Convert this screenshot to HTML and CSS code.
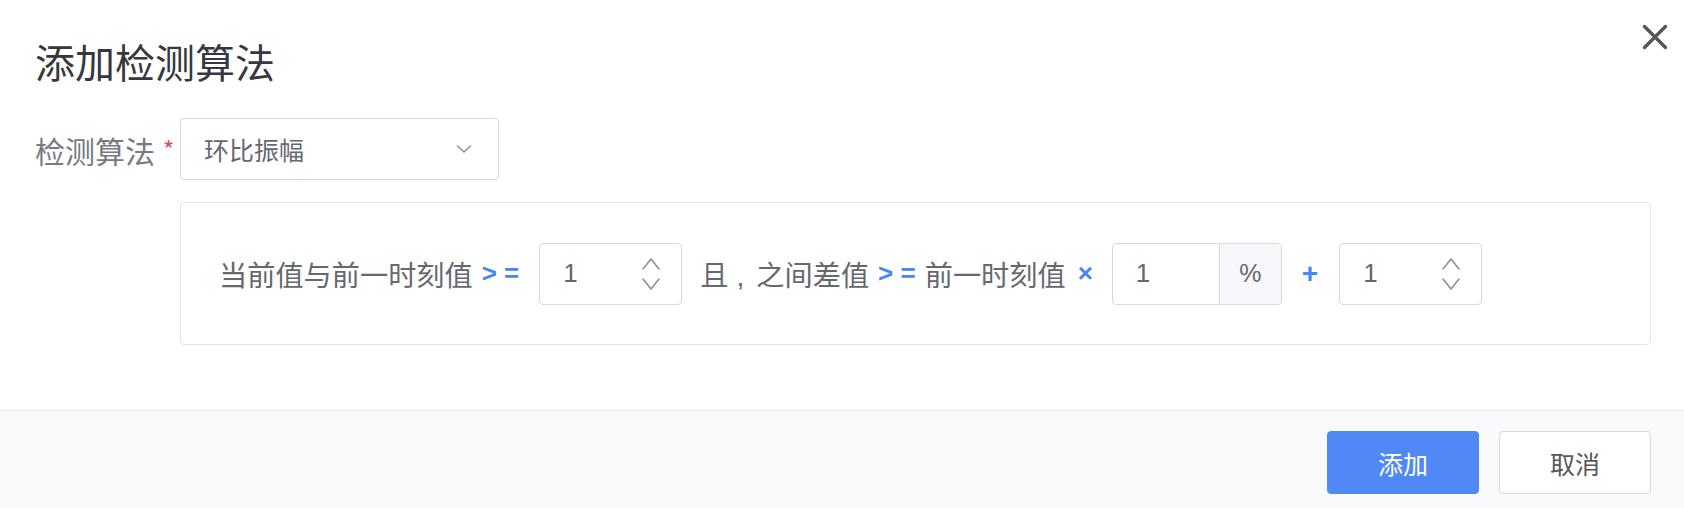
FILE: index.html
```html
<!DOCTYPE html>
<html lang="zh-CN">
<head>
<meta charset="utf-8">
<title>添加检测算法</title>
<link rel="stylesheet" href="styles.css">
</head>
<body>
<div class="dialog">
  <div class="header">
    <h1 class="title">添加检测算法</h1>
    <button class="close" aria-label="关闭">
      <svg width="26" height="26" viewBox="0 0 26 26"><path d="M2.5 2.5 L23.5 23.5 M23.5 2.5 L2.5 23.5" stroke="#55575d" stroke-width="3.4" stroke-linecap="round" fill="none"/></svg>
    </button>
  </div>
  <div class="body">
    <div class="form-row">
      <div class="label">检测算法<span class="req">*</span></div>
      <div class="select">
        <span class="select-text">环比振幅</span>
        <svg class="chev" width="16" height="10" viewBox="0 0 16 10"><path d="M1.5 2 L8 8 L14.5 2" stroke="#8e9096" stroke-width="1.6" fill="none" stroke-linecap="round" stroke-linejoin="round"/></svg>
      </div>
    </div>
    <div class="cond-box">
      <span class="txt">当前值与前一时刻值</span>
      <span class="op op-ge1">&gt;&nbsp;=</span>
      <div class="field num">
        <span class="val">1</span>
        <svg class="spin" width="20" height="34" viewBox="0 0 20 34"><path d="M2 12 L10 2 L18 12 M2 22 L10 32 L18 22" stroke="#8e9096" stroke-width="1.6" fill="none" stroke-linecap="round" stroke-linejoin="round"/></svg>
      </div>
      <span class="txt txt-and">且<span class="comma">,</span>之间差值</span>
      <span class="op">&gt;&nbsp;=</span>
      <span class="txt">前一时刻值</span>
      <span class="op op-mul">×</span>
      <div class="field pct">
        <span class="val">1</span>
        <span class="append">%</span>
      </div>
      <span class="op op-plus">+</span>
      <div class="field num">
        <span class="val">1</span>
        <svg class="spin" width="20" height="34" viewBox="0 0 20 34"><path d="M2 12 L10 2 L18 12 M2 22 L10 32 L18 22" stroke="#8e9096" stroke-width="1.6" fill="none" stroke-linecap="round" stroke-linejoin="round"/></svg>
      </div>
    </div>
  </div>
  <div class="footer">
    <button class="btn primary">添加</button>
    <button class="btn">取消</button>
  </div>
</div>
</body>
</html>
```

FILE: styles.css
```css
* { box-sizing: border-box; }
html, body { margin: 0; padding: 0; background: #fff; }
body { font-family: "Noto Sans CJK SC", "Noto Sans", sans-serif; color: #606266; }

.dialog {
  position: relative;
  height: 100vh;
  display: flex;
  flex-direction: column;
}

.header { padding: 37px 35px 0; }
.title {
  margin: 0;
  font-size: 40px;
  line-height: 48px;
  font-weight: 400;
  color: #36383d;
}
.close {
  position: absolute;
  top: 24px;
  right: 16px;
  padding: 0;
  border: 0;
  background: none;
  width: 26px;
  height: 26px;
}
.close svg { display: block; }

.body { padding: 33px 33px 0 35px; }

.form-row { display: flex; align-items: center; }
.label {
  width: 145px;
  font-size: 30px;
  line-height: 40px;
  color: #777a80;
}
.req { color: #e5484d; font-size: 24px; margin-left: 8px; vertical-align: 4px; }

.select {
  width: 319px;
  height: 62px;
  border: 1px solid #d6d8dd;
  border-radius: 4px;
  display: flex;
  align-items: center;
  justify-content: space-between;
  padding: 0 26px 0 23px;
}
.select-text { font-size: 25px; color: #66686e; }
.chev { display: block; }

.cond-box {
  margin: 22px 0 0 145px;
  height: 143px;
  border: 1px solid #e2e4e9;
  border-radius: 4px;
  display: flex;
  align-items: center;
  padding-left: 38px;
}
.txt { font-size: 28.2px; color: #66686e; white-space: nowrap; }
.txt-and { margin-left: 18px; }
.comma {
  font-family: "Liberation Sans", Arial, sans-serif;
  margin: 0 12px 0 8px;
}
.op {
  font-family: "Liberation Sans", Arial, sans-serif;
  font-weight: 700;
  font-size: 26px;
  color: #4a86f0;
  margin: 0 9px;
  white-space: nowrap;
}
.op-ge1 { margin: 0 20px 0 9px; }
.op-mul { margin: 0 19px 0 12px; }
.op-plus { font-size: 28px; margin: 0 21px 0 20px; }

.field {
  height: 62px;
  border: 1px solid #d6d8dd;
  border-radius: 4px;
  display: flex;
  align-items: center;
}
.val {
  font-family: "Liberation Sans", Arial, sans-serif;
  font-size: 26px;
  color: #66686e;
}
.num {
  width: 143px;
  justify-content: space-between;
  padding: 0 20px 0 23px;
}
.spin { display: block; }
.pct { width: 170px; overflow: hidden; }
.pct .val { flex: 1; padding-left: 23px; }
.append {
  width: 62px;
  height: 100%;
  border-left: 1px solid #d6d8dd;
  background: #f6f7fa;
  display: flex;
  align-items: center;
  justify-content: center;
  font-family: "Liberation Sans", Arial, sans-serif;
  font-size: 25px;
  color: #66686e;
}

.footer {
  margin-top: auto;
  height: 98px;
  border-top: 1px solid #e4e6eb;
  background: #f9fafc;
  display: flex;
  justify-content: flex-end;
  align-items: flex-start;
  gap: 20px;
  padding: 20px 33px 0 0;
}
.btn {
  width: 152px;
  height: 63px;
  border: 1px solid #d6d8dd;
  border-radius: 4px;
  background: #fff;
  font-family: "Noto Sans CJK SC", "Noto Sans", sans-serif;
  font-size: 25px;
  color: #55575c;
  padding: 0;
}
.btn.primary {
  background: #5088f5;
  border-color: #5088f5;
  color: #fff;
}
```
